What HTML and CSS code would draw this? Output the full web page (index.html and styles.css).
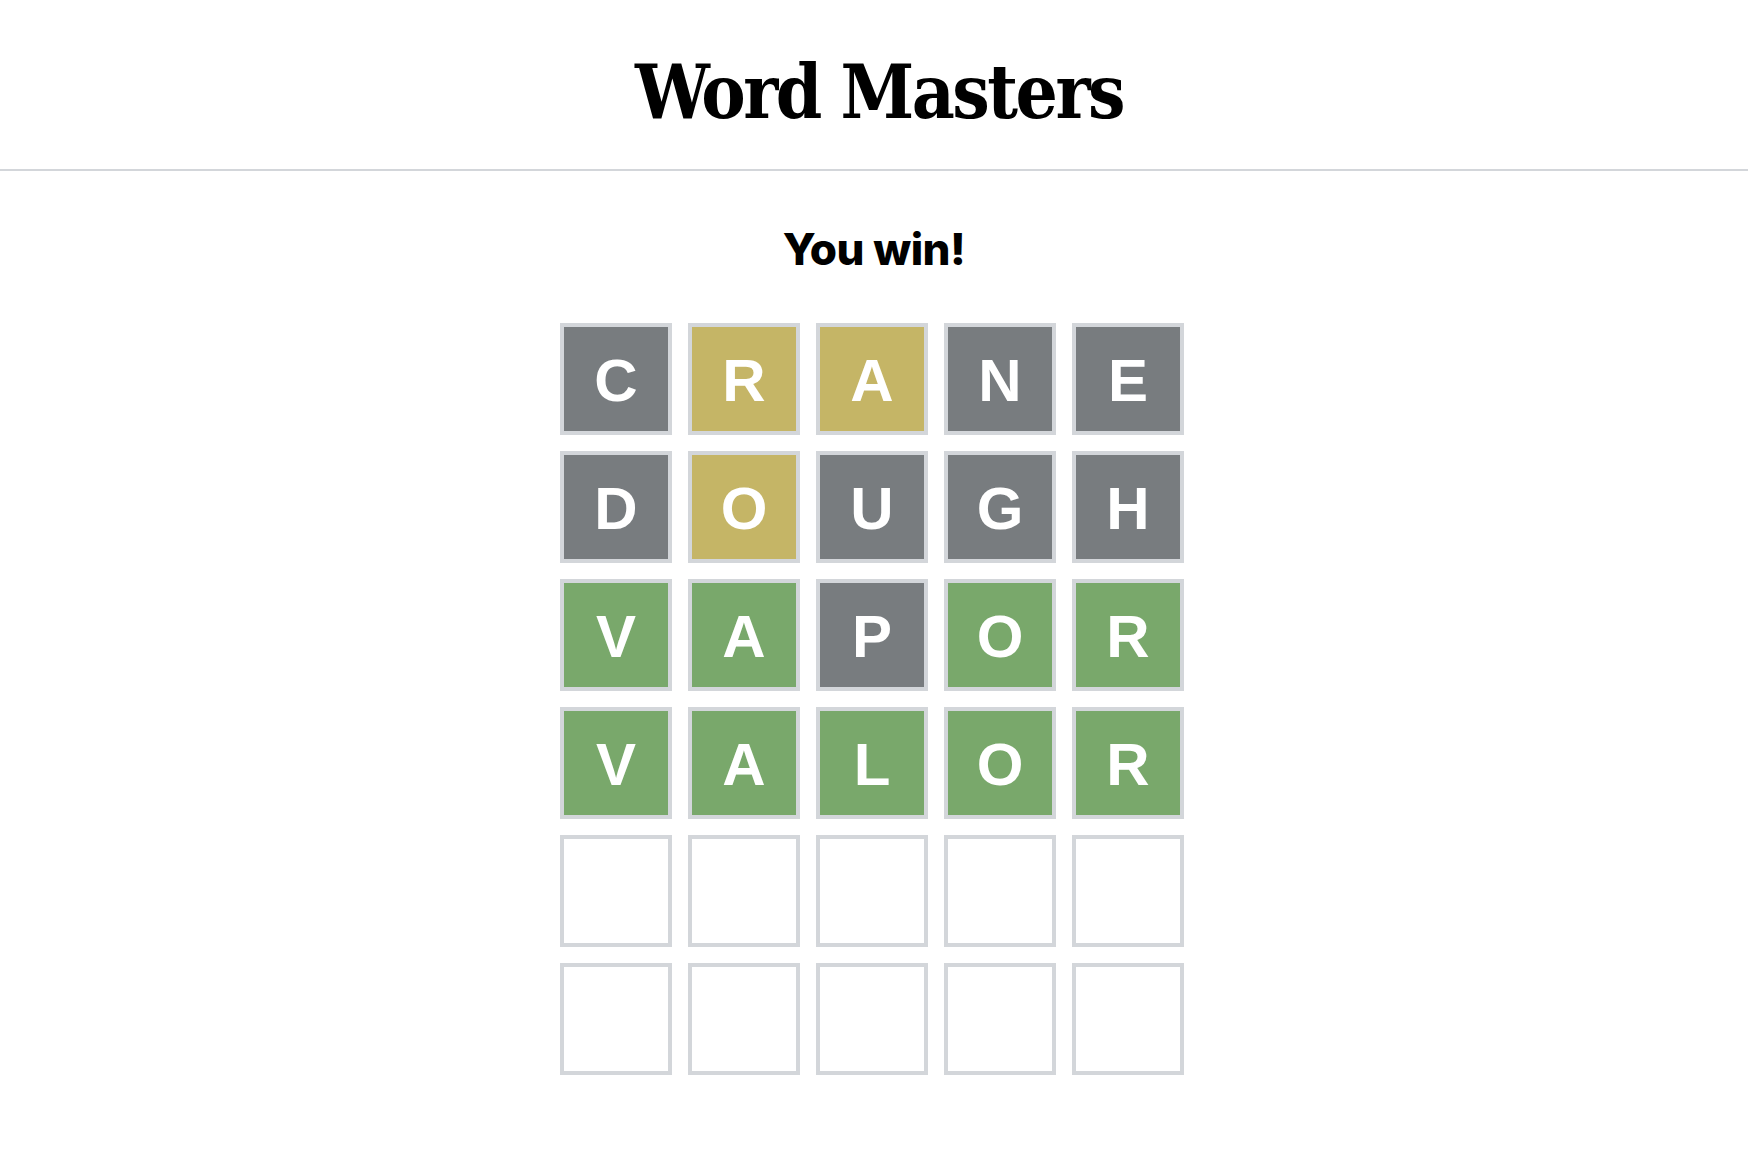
FILE: index.html
```html
<!DOCTYPE html>
<html lang="en">
<head>
<meta charset="utf-8">
<title>Word Masters</title>
<link rel="stylesheet" href="styles.css">
</head>
<body>
<header class="brand-bar">
  <h1 class="brand">Word Masters</h1>
</header>
<main class="game">
  <h2 class="status">You win!</h2>
  <div class="board">
    <div class="cell absent">C</div>
    <div class="cell present">R</div>
    <div class="cell present">A</div>
    <div class="cell absent">N</div>
    <div class="cell absent">E</div>

    <div class="cell absent">D</div>
    <div class="cell present">O</div>
    <div class="cell absent">U</div>
    <div class="cell absent">G</div>
    <div class="cell absent">H</div>

    <div class="cell correct">V</div>
    <div class="cell correct">A</div>
    <div class="cell absent">P</div>
    <div class="cell correct">O</div>
    <div class="cell correct">R</div>

    <div class="cell correct">V</div>
    <div class="cell correct">A</div>
    <div class="cell correct">L</div>
    <div class="cell correct">O</div>
    <div class="cell correct">R</div>

    <div class="cell"></div>
    <div class="cell"></div>
    <div class="cell"></div>
    <div class="cell"></div>
    <div class="cell"></div>

    <div class="cell"></div>
    <div class="cell"></div>
    <div class="cell"></div>
    <div class="cell"></div>
    <div class="cell"></div>
  </div>
</main>
</body>
</html>
```

FILE: styles.css
```css
* {
  box-sizing: border-box;
}

html, body {
  margin: 0;
  padding: 0;
  background: #ffffff;
  color: #000000;
}

body {
  font-family: "Liberation Sans", Arial, sans-serif;
}

.brand-bar {
  height: 171px;
  padding-top: 14px;
  border-bottom: 2px solid #d3d6da;
  display: flex;
  align-items: center;
  justify-content: center;
}

.brand {
  margin: 0 0 0 10px;
  font-family: "DejaVu Serif Condensed", "DejaVu Serif", "Liberation Serif", serif;
  font-weight: 700;
  font-size: 74px;
  line-height: 1;
  letter-spacing: -2.5px;
}

.game {
  display: flex;
  flex-direction: column;
  align-items: center;
  padding-top: 56px;
}

.status {
  margin: 0 0 52px;
  font-family: Inter, "Noto Sans", sans-serif;
  font-weight: 800;
  font-size: 44px;
  line-height: 1;
  letter-spacing: -0.5px;
}

.board {
  display: grid;
  grid-template-columns: repeat(5, 112px);
  grid-auto-rows: 112px;
  gap: 16px;
  margin-right: 4px;
}

.cell {
  border: 4px solid #d3d6da;
  display: flex;
  align-items: center;
  justify-content: center;
  padding-top: 4px;
  color: #ffffff;
  font-family: "Liberation Sans", Arial, sans-serif;
  font-weight: 700;
  font-size: 60px;
  line-height: 1;
}

.absent {
  background: #787c7f;
}

.present {
  background: #c5b566;
}

.correct {
  background: #79a86b;
}
```
